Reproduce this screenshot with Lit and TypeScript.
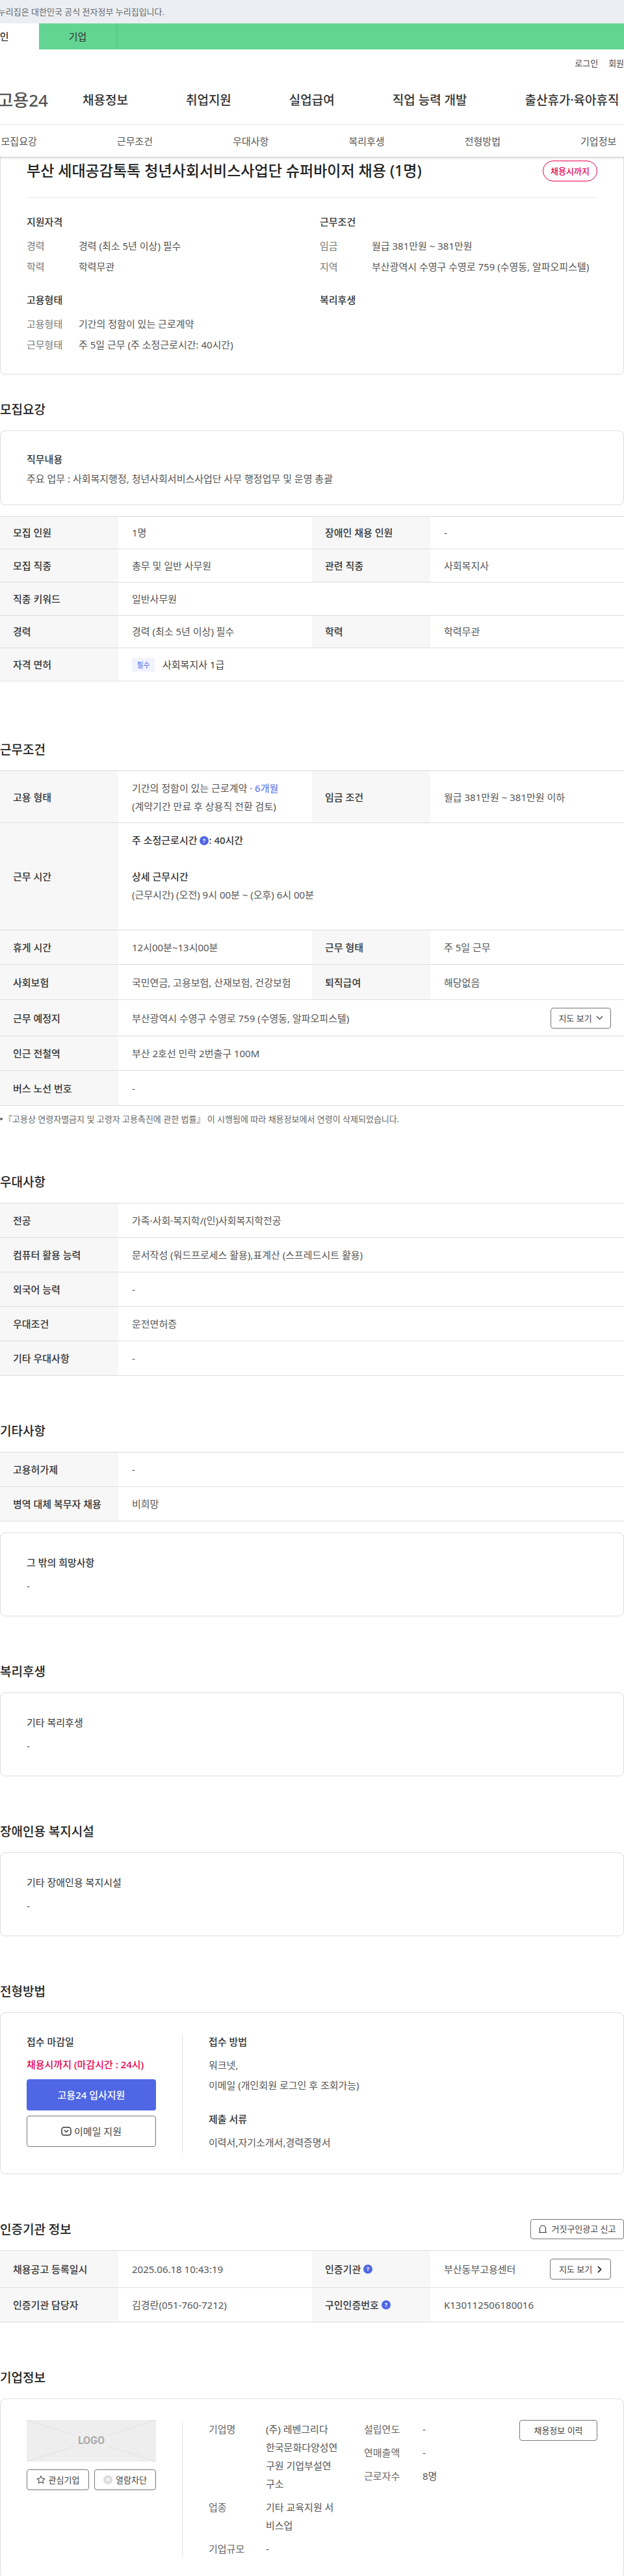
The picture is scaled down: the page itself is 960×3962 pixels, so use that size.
import { LitElement, css, html, nothing, svg, type TemplateResult } from "lit";
import { customElement } from "lit/decorators.js";

type Cell = [string, unknown];

interface Row {
  h: number;
  cells: Cell[];
}

const help = html`<svg class="help" viewBox="0 0 14 14" width="14" height="14">
  <circle cx="7" cy="7" r="7" fill="#4f67e4"></circle>
  <text x="7" y="10" text-anchor="middle" font-size="9" font-weight="700" fill="#fff">?</text>
</svg>`;

const chevronDown = svg`<path d="M1 1l4.5 4.5L10 1" fill="none" stroke="#444" stroke-width="1.3"></path>`;
const chevronRight = svg`<path d="M1 1l4.5 4.5L1 10" fill="none" stroke="#333" stroke-width="1.8"></path>`;

const mapDown = html`<button class="btn map">
  지도 보기 <svg width="11" height="7" viewBox="0 0 11 7">${chevronDown}</svg>
</button>`;

const recruit: Row[] = [
  { h: 50.7, cells: [["모집 인원", "1명"], ["장애인 채용 인원", "-"]] },
  { h: 50.7, cells: [["모집 직종", "총무 및 일반 사무원"], ["관련 직종", "사회복지사"]] },
  { h: 50.7, cells: [["직종 키워드", "일반사무원"]] },
  { h: 50.7, cells: [["경력", "경력 (최소 5년 이상) 필수"], ["학력", "학력무관"]] },
  {
    h: 50.7,
    cells: [["자격 면허", html`<span class="must">필수</span><span class="license">사회복지사 1급</span>`]],
  },
];

const terms: Row[] = [
  {
    h: 80.5,
    cells: [
      [
        "고용 형태",
        html`<div>기간의 정함이 있는 근로계약 <span class="blue">· 6개월</span><br />(계약기간 만료 후 상용직 전환 검토)</div>`,
      ],
      ["임금 조건", "월급 381만원 ~ 381만원 이하"],
    ],
  },
  {
    h: 165,
    cells: [
      [
        "근무 시간",
        html`<div class="hours">
          <span class="strong">주 소정근로시간 ${help}: 40시간</span><br /><br />
          <span class="strong">상세 근무시간</span><br />
          (근무시간) (오전) 9시 00분 ~ (오후) 6시 00분
        </div>`,
      ],
    ],
  },
  { h: 53, cells: [["휴게 시간", "12시00분~13시00분"], ["근무 형태", "주 5일 근무"]] },
  { h: 53.5, cells: [["사회보험", "국민연금, 고용보험, 산재보험, 건강보험"], ["퇴직급여", "해당없음"]] },
  { h: 56.5, cells: [["근무 예정지", html`부산광역시 수영구 수영로 759 (수영동, 알파오피스텔)${mapDown}`]] },
  { h: 53, cells: [["인근 전철역", "부산 2호선 민락 2번출구 100M"]] },
  { h: 53.5, cells: [["버스 노선 번호", "-"]] },
];

const prefer: Row[] = [
  { h: 53, cells: [["전공", "가족·사회·복지학/(인)사회복지학전공"]] },
  { h: 53, cells: [["컴퓨터 활용 능력", "문서작성 (워드프로세스 활용),표계산 (스프레드시트 활용)"]] },
  { h: 53, cells: [["외국어 능력", "-"]] },
  { h: 53, cells: [["우대조건", "운전면허증"]] },
  { h: 53, cells: [["기타 우대사항", "-"]] },
];

const etc: Row[] = [
  { h: 53, cells: [["고용허가제", "-"]] },
  { h: 53, cells: [["병역 대체 복무자 채용", "비희망"]] },
];

const agency: Row[] = [
  {
    h: 57.5,
    cells: [
      ["채용공고 등록일시", "2025.06.18 10:43:19"],
      [
        "인증기관|help",
        html`부산동부고용센터<button class="btn map next">
            지도 보기 <svg width="7" height="11" viewBox="0 0 7 11">${chevronRight}</svg>
          </button>`,
      ],
    ],
  },
  {
    h: 53,
    cells: [
      ["인증기관 담당자", "김경란(051-760-7212)"],
      ["구인인증번호|help", "K130112506180016"],
    ],
  },
];

@customElement("app-root")
export class AppRoot extends LitElement {
  private renderTable(rows: Row[]): TemplateResult {
    return html`<div class="table">
      ${rows.map(
        (row) => html`<div class="row" style="height:${row.h}px">
          ${row.cells.map(([label, value]) => {
            const [text, flag] = label.split("|");
            return html`<div class="th">${text}${flag ? help : nothing}</div>
              <div class="td ${row.cells.length === 1 ? "wide" : ""}">${value}</div>`;
          })}
        </div>`
      )}
    </div>`;
  }

  private renderSummary() {
    return html`<section class="summary">
      <div class="title-row">
        <h1>부산 세대공감톡톡 청년사회서비스사업단 슈퍼바이저 채용 (1명)</h1>
        <span class="dday">채용시까지</span>
      </div>
      <div class="summary-grid">
        <div>
          <h3>지원자격</h3>
          <dl>
            <dt>경력</dt><dd>경력 (최소 5년 이상) 필수</dd>
            <dt>학력</dt><dd>학력무관</dd>
          </dl>
        </div>
        <div>
          <h3>근무조건</h3>
          <dl>
            <dt>임금</dt><dd>월급 381만원 ~ 381만원</dd>
            <dt>지역</dt><dd>부산광역시 수영구 수영로 759 (수영동, 알파오피스텔)</dd>
          </dl>
        </div>
        <div>
          <h3>고용형태</h3>
          <dl>
            <dt>고용형태</dt><dd>기간의 정함이 있는 근로계약</dd>
            <dt>근무형태</dt><dd>주 5일 근무 (주 소정근로시간: 40시간)</dd>
          </dl>
        </div>
        <div><h3>복리후생</h3></div>
      </div>
    </section>`;
  }

  private renderNote(title: string, cls = "") {
    return html`<div class="card note ${cls}">
      <div class="note-title">${title}</div>
      <div>-</div>
    </div>`;
  }

  private renderApply() {
    return html`<div class="card apply">
      <div class="apply-left">
        <div class="label">접수 마감일</div>
        <div class="deadline">채용시까지 (마감시간 : 24시)</div>
        <button class="apply-main">고용24 입사지원</button>
        <button class="btn apply-mail">
          <svg width="16" height="16" viewBox="0 0 16 16" fill="none" stroke="#333" stroke-width="1.5">
            <rect x="1" y="2" width="14" height="12" rx="3.5"></rect>
            <path d="M4.8 6.2l3.2 3 3.2-3"></path>
          </svg>
          이메일 지원
        </button>
      </div>
      <div class="apply-right">
        <div class="label">접수 방법</div>
        <div class="lines">워크넷,<br />이메일 (개인회원 로그인 후 조회가능)</div>
        <div class="label docs">제출 서류</div>
        <div class="lines">이력서,자기소개서,경력증명서</div>
      </div>
    </div>`;
  }

  private renderCompany() {
    return html`<div class="card company">
      <div class="company-left">
        <div class="logo-box">
          <svg viewBox="0 0 199 64" width="199" height="64" stroke="#e0e0e0" stroke-width="1">
            <path d="M0 0l72 23M199 0l-72 23M0 64l72-23M199 64l-72-23"></path>
          </svg>
          <span>LOGO</span>
        </div>
        <div class="logo-actions">
          <button class="btn small">
            <svg width="14" height="14" viewBox="0 0 14 14" fill="none" stroke="#555" stroke-width="1.1">
              <path d="M7 1.2l1.8 3.7 4 .6-2.9 2.8.7 4L7 10.4l-3.6 1.9.7-4L1.2 5.5l4-.6z"></path>
            </svg>
            관심기업
          </button>
          <button class="btn small">
            <svg width="14" height="14" viewBox="0 0 14 14">
              <circle cx="7" cy="7" r="7" fill="#ddd"></circle>
              <path d="M4.5 4.5l5 5M9.5 4.5l-5 5" stroke="#fff" stroke-width="1.4"></path>
            </svg>
            열람차단
          </button>
        </div>
      </div>
      <div class="company-right">
        <div class="company-col first">
          <span class="k">기업명</span>
          <span class="v">(주) 레벤그리다<br />한국문화다양성연<br />구원 기업부설연<br />구소</span>
          <span class="k">업종</span>
          <span class="v">기타 교육지원 서<br />비스업</span>
          <span class="k">기업규모</span>
          <span class="v">-</span>
        </div>
        <div class="company-col second">
          <span class="k">설립연도</span><span class="v">-</span>
          <span class="k">연매출액</span><span class="v">-</span>
          <span class="k">근로자수</span><span class="v">8명</span>
        </div>
        <button class="btn history">채용정보 이력</button>
      </div>
    </div>`;
  }

  render() {
    return html`<div class="page">
      <div class="gov"><span>이 누리집은 대한민국 공식 전자정부 누리집입니다.</span></div>
      <div class="user-tabs">
        <div class="person"><span>개인</span></div>
        <div class="corp">기업</div>
      </div>
      <div class="util"><span>로그인</span><span>회원가입</span></div>
      <nav class="gnb">
        <div class="logo"><span>고용24</span></div>
        <div class="gnb-items">
          <span>채용정보</span><span>취업지원</span><span>실업급여</span><span>직업 능력 개발</span><span>출산휴가·육아휴직</span>
        </div>
      </nav>
      <div class="anchors">
        ${["모집요강", "근무조건", "우대사항", "복리후생", "전형방법", "기업정보"].map((t) => html`<span>${t}</span>`)}
      </div>

      ${this.renderSummary()}

      <section class="sec first">
        <h2>모집요강</h2>
        <div class="card duty">
          <div class="note-title">직무내용</div>
          <div>주요 업무 : 사회복지행정, 청년사회서비스사업단 사무 행정업무 및 운영 총괄</div>
        </div>
        ${this.renderTable(recruit)}
      </section>

      <section class="sec terms">
        <h2>근무조건</h2>
        ${this.renderTable(terms)}
        <p class="law">『고용상 연령차별금지 및 고령자 고용촉진에 관한 법률』 이 시행됨에 따라 채용정보에서 연령이 삭제되었습니다.</p>
      </section>

      <section class="sec">
        <h2>우대사항</h2>
        ${this.renderTable(prefer)}
      </section>

      <section class="sec">
        <h2>기타사항</h2>
        ${this.renderTable(etc)}
        ${this.renderNote("그 밖의 희망사항", "spaced strong-title")}
      </section>

      <section class="sec">
        <h2>복리후생</h2>
        ${this.renderNote("기타 복리후생")}
      </section>

      <section class="sec">
        <h2>장애인용 복지시설</h2>
        ${this.renderNote("기타 장애인용 복지시설")}
      </section>

      <section class="sec">
        <h2>전형방법</h2>
        ${this.renderApply()}
      </section>

      <section class="sec">
        <div class="head-row">
          <h2>인증기관 정보</h2>
          <button class="btn report">
            <svg width="14" height="14" viewBox="0 0 14 14" fill="none" stroke="#333" stroke-width="1.1">
              <path d="M2.5 12.5V6.5a4.5 4.5 0 019 0v6M1 12.5h12"></path>
            </svg>
            거짓구인광고 신고
          </button>
        </div>
        ${this.renderTable(agency)}
      </section>

      <section class="sec">
        <h2>기업정보</h2>
        ${this.renderCompany()}
      </section>
    </div>`;
  }

  static styles = css`
    :host {
      display: block;
      background: #fff;
      font-family: "Noto Sans", "Noto Sans CJK KR", sans-serif;
      font-size: 15px;
      line-height: 28px;
      color: #555;
    }

    * {
      box-sizing: border-box;
    }

    h1,
    h2,
    h3,
    p,
    dl,
    dd {
      margin: 0;
    }

    button {
      font: inherit;
      cursor: pointer;
    }

    .page {
      width: 960px;
      height: 3962px;
      overflow: hidden;
    }

    .gov {
      height: 36px;
      width: 960px;
      background: #ebeff4;
      font-size: 13px;
      line-height: 36px;
      color: #666;
    }

    .gov span {
      display: flex;
      justify-content: flex-end;
      width: 253px;
      white-space: nowrap;
    }

    .user-tabs {
      display: flex;
      height: 40px;
      background: #62d592;
      line-height: 40px;
      color: #333;
    }

    .person {
      width: 60px;
      background: #fff;
      font-weight: 500;
      white-space: nowrap;
    }

    .person span {
      margin-left: -14px;
    }

    .corp {
      width: 120px;
      text-align: center;
      border-right: 1px solid #55c383;
    }

    .util {
      display: flex;
      gap: 16px;
      height: 41px;
      margin-right: -24px;
      justify-content: flex-end;
      align-items: center;
      font-size: 13px;
      color: #444;
    }

    .gnb {
      display: flex;
      height: 75px;
      align-items: center;
      padding-top: 0;
      border-bottom: 1px solid #e8e8e8;
    }

    .logo {
      display: flex;
      justify-content: flex-end;
      flex: none;
      width: 74px;
      font-size: 26px;
      font-weight: 500;
      color: #555;
      white-space: nowrap;
    }

    .gnb-items {
      display: flex;
      gap: 89px;
      margin-left: 53px;
      font-size: 19px;
      font-weight: 500;
      color: #333;
      white-space: nowrap;
    }

    .anchors {
      position: relative;
      z-index: 1;
      display: grid;
      grid-template-columns: repeat(6, 178.3px);
      height: 49px;
      margin-left: -60px;
      width: 1020px;
      align-items: center;
      justify-items: center;
      background: #fff;
      box-shadow: 0 2px 3px rgba(0, 0, 0, 0.18);
      color: #555;
    }

    .summary {
      height: 335px;
      padding: 6px 40px 0;
      border: 1px solid #ddd;
      border-top: 0;
      border-radius: 0 0 8px 8px;
    }

    .title-row {
      display: flex;
      justify-content: space-between;
      align-items: flex-start;
      height: 57px;
      border-bottom: 1px solid #e8e8e8;
    }

    h1 {
      font-size: 23px;
      line-height: 30px;
      font-weight: 500;
      color: #222;
    }

    .dday {
      display: flex;
      width: 84px;
      height: 32px;
      align-items: center;
      justify-content: center;
      border: 1px solid #e6004f;
      border-radius: 16px;
      color: #e6004f;
      font-size: 13px;
      font-weight: 500;
    }

    .summary-grid {
      display: grid;
      grid-template-columns: 451px 1fr;
      row-gap: 27px;
      padding-top: 25px;
    }

    h3 {
      margin: 0 0 13px;
      font-size: 15px;
      line-height: 24px;
      font-weight: 500;
      color: #333;
    }

    dl {
      display: grid;
      grid-template-columns: 80px 1fr;
      row-gap: 8px;
      line-height: 24px;
    }

    dt {
      color: #777;
    }

    dd {
      white-space: nowrap;
    }

    .sec {
      margin-top: 69px;
    }

    .sec.first {
      margin-top: 38px;
    }

    .sec.terms {
      margin-top: 89px;
    }

    h2 {
      margin: 0 0 16px;
      font-size: 19px;
      line-height: 32px;
      font-weight: 500;
      color: #222;
    }

    .card {
      border: 1px solid #ddd;
      border-radius: 8px;
    }

    .duty {
      height: 114.5px;
      padding: 29px 40px 0;
      margin-bottom: 17px;
    }

    .duty .note-title {
      margin-bottom: 2px;
    }

    .note {
      height: 129px;
      padding: 31px 40px 0;
    }

    .note.spaced {
      margin-top: 17px;
    }

    .note-title {
      margin-bottom: 8px;
      color: #333;
    }

    .duty .note-title,
    .strong-title .note-title {
      font-weight: 500;
      color: #333;
    }

    .table {
      border-top: 1px solid #ddd;
    }

    .row {
      display: grid;
      grid-template-columns: 182px 298px 182px 298px;
      border-bottom: 1px solid #ddd;
    }

    .th {
      display: flex;
      align-items: center;
      gap: 4px;
      padding-left: 20px;
      background: #f7f7f7;
      font-weight: 500;
      color: #333;
      white-space: nowrap;
    }

    .td {
      display: flex;
      align-items: center;
      padding-left: 21px;
      white-space: nowrap;
    }

    .td.wide {
      grid-column: span 3;
    }

    .hours {
      align-self: flex-start;
      padding-top: 12px;
    }

    .strong {
      font-weight: 500;
      color: #333;
    }

    .blue {
      color: #4f67e4;
    }

    .help {
      flex: none;
      vertical-align: -2px;
    }

    .must {
      display: inline-block;
      width: 35px;
      height: 21px;
      margin-right: 12px;
      border-radius: 3px;
      background: #f0f2fe;
      color: #4f67e4;
      font-size: 11px;
      line-height: 21px;
      text-align: center;
    }

    .license {
      color: #444;
    }

    .law {
      position: relative;
      height: 32px;
      padding: 6px 0 0 6px;
      font-size: 13px;
      color: #666;
    }

    .law::before {
      content: "";
      position: absolute;
      left: 0;
      top: 18px;
      width: 4px;
      height: 4px;
      border-radius: 50%;
      background: #666;
    }

    .btn {
      display: inline-flex;
      align-items: center;
      justify-content: center;
      gap: 4px;
      padding: 0;
      background: #fff;
      border: 1px solid #767676;
      border-radius: 4px;
      color: #444;
      font-size: 13px;
      white-space: nowrap;
    }

    .map {
      width: 93px;
      height: 32px;
      margin-left: auto;
      margin-right: 20px;
      gap: 6px;
    }

    .map.next {
      width: 94px;
      gap: 8px;
    }

    .apply {
      display: flex;
      height: 249px;
      padding-top: 32px;
    }

    .apply-left {
      display: flex;
      flex-direction: column;
      width: 280px;
      height: 184px;
      padding: 0 40px;
      border-right: 1px solid #e5e5e5;
    }

    .label {
      line-height: 25px;
      font-weight: 500;
      color: #333;
    }

    .deadline {
      margin-top: 10px;
      line-height: 25px;
      color: #e6004f;
      font-weight: 500;
    }

    .apply-main {
      height: 48px;
      margin-top: 10px;
      border: 0;
      border-radius: 4px;
      background: #4f67e4;
      color: #fff;
      font-size: 15px;
      font-weight: 500;
    }

    .apply-mail {
      height: 48px;
      margin-top: 8px;
      font-size: 15px;
    }

    .apply-right {
      padding-left: 40px;
    }

    .lines {
      margin-top: 8px;
      line-height: 31px;
    }

    .docs {
      margin-top: 24px;
    }

    .head-row {
      display: flex;
      justify-content: space-between;
      align-items: flex-start;
    }

    .report {
      width: 144px;
      height: 31px;
      gap: 6px;
    }

    .company {
      display: flex;
      height: 277px;
      padding-top: 32px;
    }

    .company-left {
      width: 280px;
      height: 211px;
      padding: 0 40px;
      border-right: 1px solid #e5e5e5;
    }

    .logo-box {
      position: relative;
      display: flex;
      height: 64px;
      align-items: center;
      justify-content: center;
      background: #eee;
      color: #aaa;
      font-family: Roboto, "Noto Sans", sans-serif;
      font-size: 16px;
      font-weight: 700;
    }

    .logo-box svg {
      position: absolute;
      inset: 0;
    }

    .logo-actions {
      display: grid;
      grid-template-columns: 96px 95px;
      column-gap: 8px;
      margin-top: 12px;
    }

    .small {
      height: 32px;
      gap: 5px;
    }

    .company-right {
      display: flex;
      flex: 1;
      padding-left: 40px;
      align-items: flex-start;
    }

    .company-col {
      display: grid;
      row-gap: 8px;
    }

    .company-col.first {
      grid-template-columns: 88px 151px;
    }

    .company-col.second {
      grid-template-columns: 90px 149px;
    }

    .k {
      color: #666;
    }

    .history {
      width: 120px;
      height: 32px;
    }
  `;
}

declare global {
  interface HTMLElementTagNameMap {
    "app-root": AppRoot;
  }
}
